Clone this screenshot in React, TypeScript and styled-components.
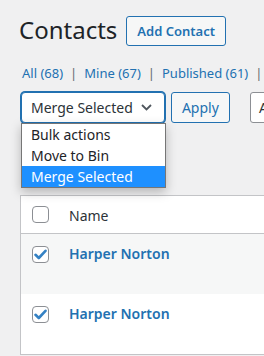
import React from 'react'
import styled, { createGlobalStyle } from 'styled-components'

const GlobalStyle = createGlobalStyle`
  html, body {
    margin: 0;
    padding: 0;
    background: #f0f0f1;
    overflow: hidden;
  }
  body {
    font-family: "Noto Sans", "Open Sans", sans-serif;
    color: #3c434a;
  }
`

const views = [
  { label: 'All', count: 68 },
  { label: 'Mine', count: 67 },
  { label: 'Published', count: 61 },
]

const bulkOptions = ['Bulk actions', 'Move to Bin', 'Merge Selected']

const contacts = [
  { id: 1, name: 'Harper Norton', striped: true },
  { id: 2, name: 'Harper Norton', striped: false },
]

const Chevron = () => (
  <svg width="11" height="7" viewBox="0 0 11 7" fill="none">
    <path d="M1 1l4.5 4.5L10 1" stroke="#50575e" strokeWidth="1.8" />
  </svg>
)

const Check = () => (
  <svg width="13" height="11" viewBox="0 0 13 11">
    <path d="M1.5 5.8l3.3 3.2L11.5 1.8" fill="none" stroke="#3582c4" strokeWidth="2.6" strokeLinecap="round" strokeLinejoin="round" />
  </svg>
)

const App = () => {
  const selected = 'Merge Selected'

  return (<S.Wrap>
    <GlobalStyle />
    <S.Header>
      <S.Title>Contacts</S.Title>
      <S.AddButton>Add Contact</S.AddButton>
    </S.Header>

    <S.Views>
      {views.map((v, i) => (
        <React.Fragment key={v.label}>
          {i > 0 && <S.Sep>|</S.Sep>}
          <S.ViewLink>{v.label} ({v.count})</S.ViewLink>
        </React.Fragment>
      ))}
      <S.Sep>|</S.Sep>
    </S.Views>

    <S.TableNav>
      <S.SelectWrap>
        <S.Select>
          <span>{selected}</span>
          <Chevron />
        </S.Select>
        <S.ListBox>
          {bulkOptions.map(o => (
            <S.Option key={o} active={o === selected}>{o}</S.Option>
          ))}
        </S.ListBox>
      </S.SelectWrap>
      <S.Button>Apply</S.Button>
      <S.FilterSelect>All dates</S.FilterSelect>
    </S.TableNav>

    <S.Table>
      <S.HeadRow>
        <S.CheckCell>
          <S.Checkbox checked={false} />
        </S.CheckCell>
        <S.HeadCell>Name</S.HeadCell>
      </S.HeadRow>
      {contacts.map(c => (
        <S.Row key={c.id} striped={c.striped}>
          <S.CheckCell>
            <S.Checkbox checked>
              <Check />
            </S.Checkbox>
          </S.CheckCell>
          <S.NameCell>
            <S.RowTitle>{c.name}</S.RowTitle>
          </S.NameCell>
        </S.Row>
      ))}
    </S.Table>
  </S.Wrap>)
}

export default App

const S = {
  Wrap: styled.div`
    padding: 16px 0 0 20px;
    width: 320px;
  `,
  Header: styled.div`
    display: flex;
    align-items: center;
    height: 30px;
  `,
  Title: styled.h1`
    margin: 0 0 0 -1px;
    font-size: 24px;
    font-weight: 400;
    line-height: 30px;
    color: #1d2327;
    position: relative;
    top: -1px;
  `,
  AddButton: styled.div`
    margin-left: 9px;
    box-sizing: border-box;
    height: 30px;
    padding: 0 10px;
    display: flex;
    align-items: center;
    border: 1px solid #2271b1;
    border-radius: 3px;
    background: #f6f7f7;
    color: #2271b1;
    font-size: 13px;
    font-weight: 600;
  `,
  Views: styled.div`
    margin-top: 14px;
    display: flex;
    align-items: center;
    height: 26px;
    font-size: 13px;
    white-space: nowrap;
    margin-left: 2px;
  `,
  ViewLink: styled.span`
    color: #2271b1;
  `,
  Sep: styled.span`
    color: #646970;
    margin: 0 7px;
  `,
  TableNav: styled.div`
    margin-top: 6px;
    display: flex;
    align-items: center;
    gap: 6px;
    height: 31px;
  `,
  SelectWrap: styled.div`
    position: relative;
    width: 145px;
    height: 31px;
    margin-left: 1px;
  `,
  Select: styled.div`
    box-sizing: border-box;
    width: 100%;
    height: 100%;
    display: flex;
    align-items: center;
    justify-content: space-between;
    padding: 0 12px 0 9px;
    border: 1px solid #2271b1;
    box-shadow: 0 0 0 1px #2271b1;
    border-radius: 4px;
    background: #fff;
    color: #2c3338;
    font-size: 14px;
  `,
  ListBox: styled.div`
    position: absolute;
    top: 31px;
    left: 0;
    width: 145px;
    box-sizing: border-box;
    border: 1px solid #767676;
    background: #fff;
    box-shadow: 0 4px 10px rgba(0, 0, 0, 0.25);
    z-index: 2;
  `,
  Option: styled.div<{ active: boolean }>`
    height: 21px;
    line-height: 21px;
    padding-left: 9px;
    font-size: 14px;
    color: ${p => p.active ? '#fff' : '#1d2327'};
    background: ${p => p.active ? '#1e90ff' : 'transparent'};
  `,
  Button: styled.div`
    box-sizing: border-box;
    width: 60px;
    height: 31px;
    display: flex;
    align-items: center;
    justify-content: center;
    border: 1px solid #2271b1;
    border-radius: 3px;
    background: #f6f7f7;
    color: #2271b1;
    font-size: 14px;
  `,
  FilterSelect: styled.div`
    margin-left: 14px;
    box-sizing: border-box;
    height: 31px;
    display: flex;
    align-items: center;
    padding: 0 24px 0 8px;
    border: 1px solid #8c8f94;
    border-radius: 3px;
    background: #fff;
    color: #2c3338;
    font-size: 14px;
    white-space: nowrap;
  `,
  Table: styled.div`
    margin-top: 72px;
    border: 1px solid #c3c4c7;
    background: #fff;
  `,
  HeadRow: styled.div`
    display: flex;
    align-items: center;
    height: 37px;
    border-bottom: 1px solid #c3c4c7;
  `,
  Row: styled.div<{ striped: boolean }>`
    display: flex;
    align-items: flex-start;
    height: 60px;
    background: ${p => p.striped ? '#f6f7f7' : '#fff'};
    padding-top: 12px;
    box-sizing: border-box;
  `,
  CheckCell: styled.div`
    width: 48px;
    padding-left: 11px;
    box-sizing: border-box;
    flex-shrink: 0;
  `,
  Checkbox: styled.div<{ checked: boolean }>`
    box-sizing: border-box;
    width: 17px;
    height: 17px;
    border: 1px solid #8c8f94;
    border-radius: 4px;
    background: #fff;
    display: flex;
    align-items: center;
    justify-content: center;
  `,
  HeadCell: styled.div`
    font-size: 14px;
    color: #2c3338;
    line-height: 20px;
    padding-top: 2px;
  `,
  NameCell: styled.div`
    display: flex;
    align-items: center;
    height: 15px;
  `,
  RowTitle: styled.span`
    font-size: 14px;
    font-weight: 600;
    color: #2271b1;
  `,
}
